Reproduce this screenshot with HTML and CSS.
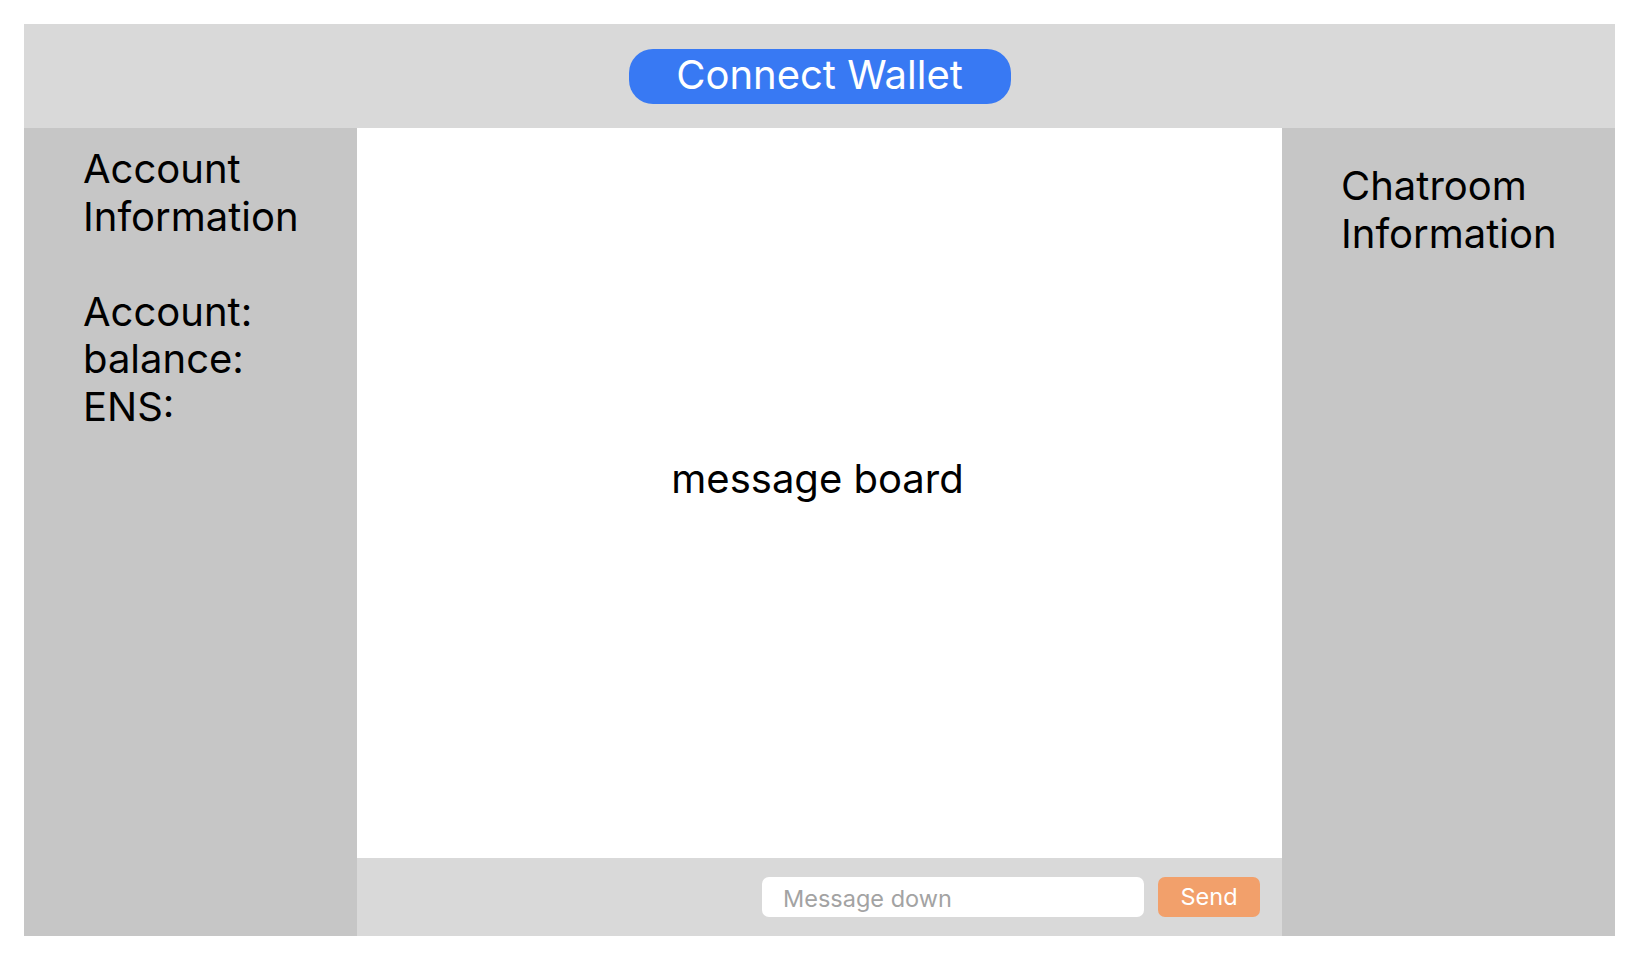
FILE: index.html
```html
<!DOCTYPE html>
<html>
<head>
<meta charset="utf-8">
<link rel="stylesheet" href="styles.css">
</head>
<body>
<div class="app">
  <header class="header">
    <button class="connect">Connect Wallet</button>
  </header>
  <main class="main">
    <aside class="side side-left">
      <div class="side-text">Account<br>Information<br><br>Account:<br>balance:<br>ENS:</div>
    </aside>
    <section class="center">
      <div class="board"><span class="board-label">message board</span></div>
      <div class="composer">
        <input class="msg-input" type="text" placeholder="Message down">
        <button class="send">Send</button>
      </div>
    </section>
    <aside class="side side-right">
      <div class="side-text">Chatroom<br>Information</div>
    </aside>
  </main>
</div>
</body>
</html>
```
FILE: styles.css
```css
* { box-sizing: border-box; }
html, body { margin: 0; padding: 0; background: #ffffff; }
body { font-family: Inter, "Noto Sans", sans-serif; color: #000; }
.app {
  width: 1640px;
  height: 962px;
  padding: 24px 25px 26px 24px;
  display: flex;
  flex-direction: column;
}
.header {
  height: 104px;
  flex: none;
  background: #d9d9d9;
  display: flex;
  align-items: center;
  justify-content: center;
}
.connect {
  width: 382px;
  height: 55px;
  border: none;
  border-radius: 24px;
  background: #3879f3;
  color: #fff;
  font-family: Inter, sans-serif;
  font-size: 40px;
  line-height: 1;
  padding: 0 0 2px;
  cursor: pointer;
}
.main {
  flex: 1;
  display: grid;
  grid-template-columns: 333px 925px 333px;
}
.side { background: #c6c6c6; }
.side-text {
  font-size: 40px;
  line-height: 47.5px;
}
.side-left { padding: 17px 0 0 59px; }
.side-right { padding: 34px 0 0 59px; }
.center { display: flex; flex-direction: column; }
.board {
  flex: 1;
  background: #ffffff;
  display: flex;
  justify-content: center;
  padding-top: 327px;
}
.board-label {
  font-size: 40px;
  line-height: 48px;
  height: 48px;
  margin-right: 4px;
}
.composer {
  height: 78px;
  flex: none;
  background: #d9d9d9;
  display: flex;
  align-items: center;
  justify-content: flex-end;
  gap: 14px;
  padding-right: 22px;
}
.msg-input {
  width: 382px;
  height: 40px;
  border: none;
  border-radius: 7px;
  background: #fff;
  padding: 3px 0 0 21px;
  font-family: Inter, sans-serif;
  font-size: 23.5px;
  color: #333;
  outline: none;
}
.msg-input::placeholder { color: #a3a3a3; }
.send {
  width: 102px;
  height: 40px;
  border: none;
  border-radius: 7px;
  background: #f2a06b;
  color: #fff;
  font-family: Inter, sans-serif;
  font-size: 23.5px;
  padding: 0 0 2px;
}
```
